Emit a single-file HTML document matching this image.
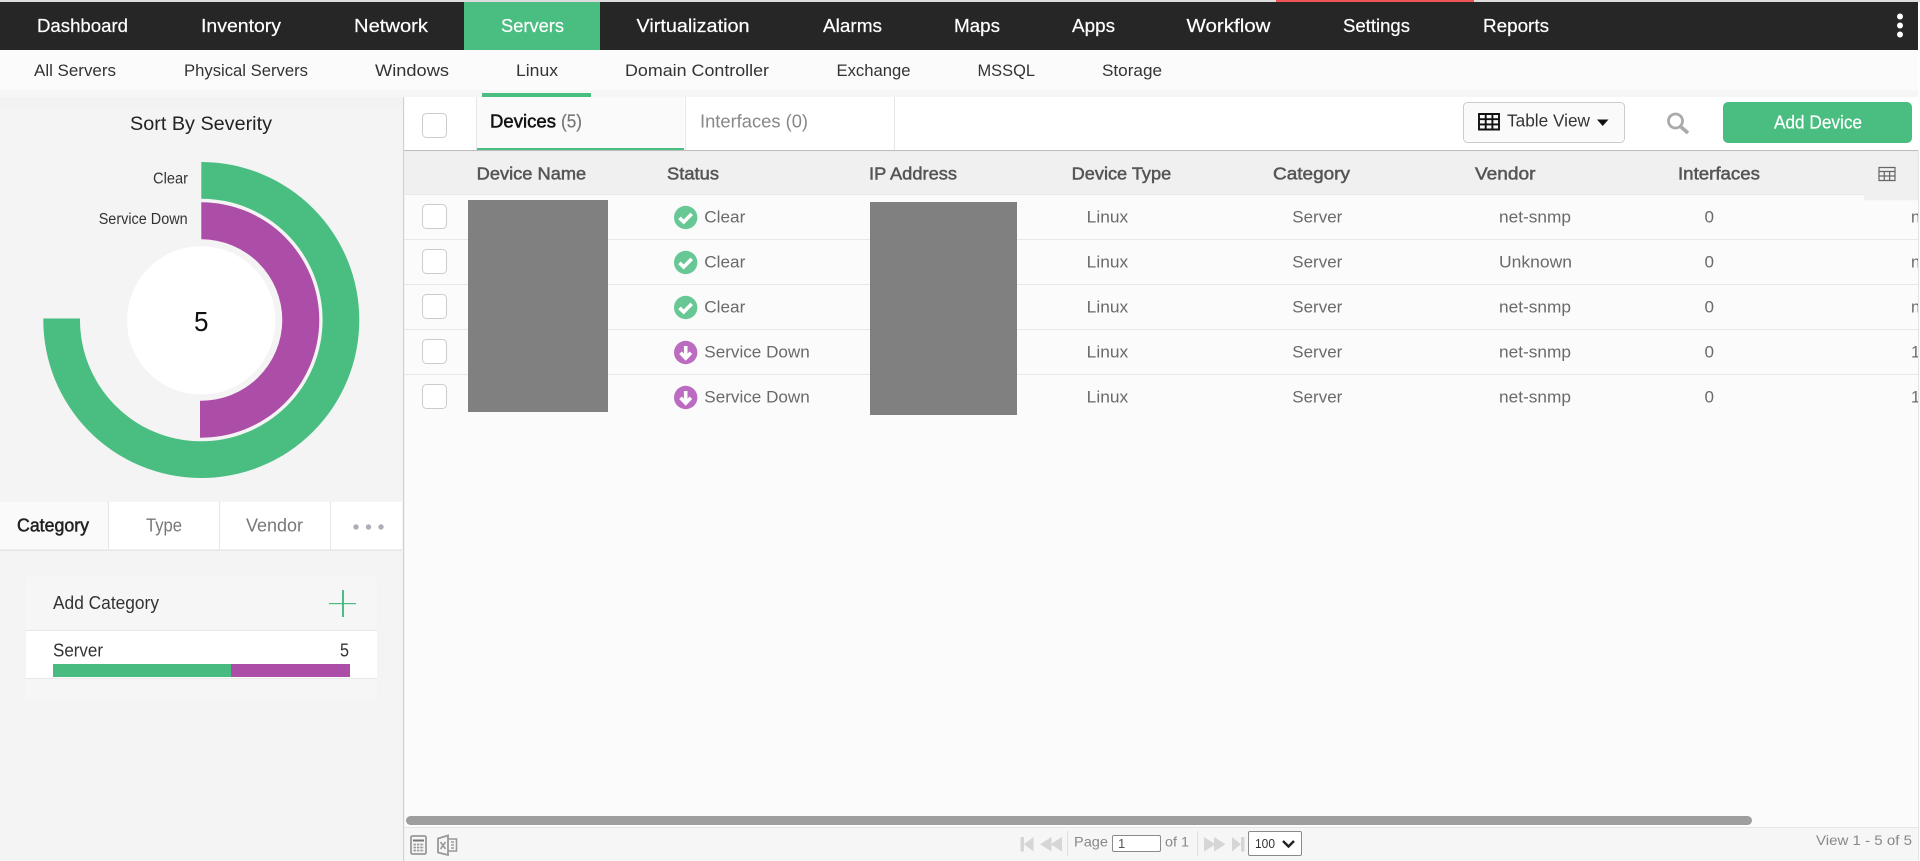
<!DOCTYPE html>
<html lang="en"><head><meta charset="utf-8"><title>Servers - Linux</title>
<style>
html,body{margin:0;padding:0;width:1920px;height:861px;overflow:hidden;background:#fff}
svg{display:block}
text{font-family:"Liberation Sans",Arial,sans-serif}
.n{font-size:18.5px;fill:#fff;stroke:#fff;stroke-width:.2}
.s{font-size:17px;fill:#333}
.h{font-size:17.5px;fill:#555;stroke:#555;stroke-width:.5}
.d{font-size:16.5px;fill:#6a6a6a}
.p{font-size:14px;fill:#888}
</style></head><body>
<svg width="1920" height="861" viewBox="0 0 1920 861" xmlns="http://www.w3.org/2000/svg">
<defs>
<g id="ok"><circle r="11.7" fill="#67c795"/><path d="M-6.2 .3L-2 4.5L6 -3.6" fill="none" stroke="#fff" stroke-width="3.6"/></g>
<g id="dn"><circle r="11.7" fill="#bb6cc1"/><path d="M0 -6.5V5M-5.2 .2L0 5.6L5.2 .2" fill="none" stroke="#fff" stroke-width="3.6"/></g>
<rect id="cb" width="24" height="24" rx="4" fill="#fff" stroke="#ccc" stroke-width="1"/>
</defs>

<!-- top -->
<rect width="1920" height="861" fill="#fff"/>
<rect width="1920" height="2" fill="#ddd"/>
<rect x="1276" width="198" height="2" fill="#f25555"/>
<rect y="2" width="1918" height="48" fill="#262626"/>
<rect x="464" y="2" width="136" height="48" fill="#4abd81"/>
<text class="n" x="37" y="32" textLength="91" lengthAdjust="spacingAndGlyphs">Dashboard</text>
<text class="n" x="201" y="32" textLength="80" lengthAdjust="spacingAndGlyphs">Inventory</text>
<text class="n" x="354" y="32" textLength="74" lengthAdjust="spacingAndGlyphs">Network</text>
<text class="n" x="501" y="32" textLength="63" lengthAdjust="spacingAndGlyphs">Servers</text>
<text class="n" x="636.5" y="32" textLength="113" lengthAdjust="spacingAndGlyphs">Virtualization</text>
<text class="n" x="823" y="32" textLength="59" lengthAdjust="spacingAndGlyphs">Alarms</text>
<text class="n" x="954" y="32" textLength="46" lengthAdjust="spacingAndGlyphs">Maps</text>
<text class="n" x="1072" y="32" textLength="43" lengthAdjust="spacingAndGlyphs">Apps</text>
<text class="n" x="1186.5" y="32" textLength="84" lengthAdjust="spacingAndGlyphs">Workflow</text>
<text class="n" x="1343" y="32" textLength="67" lengthAdjust="spacingAndGlyphs">Settings</text>
<text class="n" x="1483" y="32" textLength="66" lengthAdjust="spacingAndGlyphs">Reports</text>
<circle cx="1900" cy="16.5" r="3" fill="#fff"/><circle cx="1900" cy="25.5" r="3" fill="#fff"/><circle cx="1900" cy="34.5" r="3" fill="#fff"/>

<!-- subnav -->
<rect y="50" width="1920" height="47" fill="#fbfbfb"/>
<rect y="90" width="1920" height="7" fill="#f6f6f6"/>
<text class="s" x="34" y="76" textLength="82" lengthAdjust="spacingAndGlyphs">All Servers</text>
<text class="s" x="184" y="76" textLength="124" lengthAdjust="spacingAndGlyphs">Physical Servers</text>
<text class="s" x="375" y="76" textLength="74" lengthAdjust="spacingAndGlyphs">Windows</text>
<text class="s" x="516" y="76" textLength="42" lengthAdjust="spacingAndGlyphs">Linux</text>
<text class="s" x="625" y="76" textLength="144" lengthAdjust="spacingAndGlyphs">Domain Controller</text>
<text class="s" x="836.5" y="76" textLength="74" lengthAdjust="spacingAndGlyphs">Exchange</text>
<text class="s" x="977.5" y="76" textLength="57.5" lengthAdjust="spacingAndGlyphs">MSSQL</text>
<text class="s" x="1102" y="76" textLength="60" lengthAdjust="spacingAndGlyphs">Storage</text>
<rect x="482" y="93" width="109" height="4" fill="#4abd81"/>

<!-- left panel -->
<rect y="97" width="403" height="764" fill="#f4f4f4"/>
<rect y="97" width="403" height="10" fill="#f2f2f2"/>
<rect x="403" y="97" width="1.3" height="764" fill="#d0d0d0"/>
<text x="130" y="130" font-size="19" fill="#222" textLength="142" lengthAdjust="spacingAndGlyphs">Sort By Severity</text>
<path d="M201.3 162A158 158 0 1 1 43.3 318.5L80 318.5A121.3 121.3 0 1 0 201.3 198.7Z" fill="#4abd81"/>
<path d="M201.3 202.3A118 118 0 0 1 319.3 320.3A118 118 0 0 1 200 437.7L200 400.7A81 81 0 0 0 282.3 320.3A81 81 0 0 0 201.3 239.3Z" fill="#ac4da8"/>
<circle cx="201.2" cy="320.4" r="74.2" fill="#fff"/>
<text x="194" y="331" font-size="28" fill="#111" textLength="14.5" lengthAdjust="spacingAndGlyphs">5</text>
<text x="153" y="183.7" font-size="15.5" fill="#333" textLength="35" lengthAdjust="spacingAndGlyphs">Clear</text>
<text x="98.7" y="224" font-size="15.5" fill="#333" textLength="89" lengthAdjust="spacingAndGlyphs">Service Down</text>

<rect y="502" width="402" height="48" fill="#fff"/>
<rect y="502" width="108" height="48" fill="#fafafa"/>
<rect y="549.5" width="402" height="1.2" fill="#e2e2e2"/>
<rect x="108" y="502" width="1" height="48" fill="#e6e6e6"/><rect x="219" y="502" width="1" height="48" fill="#e6e6e6"/><rect x="330" y="502" width="1" height="48" fill="#e6e6e6"/>
<text x="17" y="531.5" font-size="18" fill="#222" stroke="#222" stroke-width=".5" textLength="72" lengthAdjust="spacingAndGlyphs">Category</text>
<text x="146" y="531.5" font-size="18" fill="#777" textLength="36" lengthAdjust="spacingAndGlyphs">Type</text>
<text x="246" y="531.5" font-size="18" fill="#777" textLength="57" lengthAdjust="spacingAndGlyphs">Vendor</text>
<circle cx="356" cy="527" r="2.7" fill="#aeaeb8"/><circle cx="368.5" cy="527" r="2.7" fill="#aeaeb8"/><circle cx="381" cy="527" r="2.7" fill="#aeaeb8"/>

<rect x="26" y="577" width="351" height="122" fill="#f6f6f6"/>
<text x="53" y="609" font-size="18" fill="#333" textLength="106" lengthAdjust="spacingAndGlyphs">Add Category</text>
<rect x="329" y="603" width="27" height="1.2" fill="#4abd81"/><rect x="342" y="590" width="2" height="27" fill="#4abd81"/>
<rect x="26" y="630" width="351" height="48.5" fill="#fff"/>
<rect x="26" y="630" width="351" height="1" fill="#e8e8e8"/><rect x="26" y="678" width="351" height="1" fill="#e8e8e8"/>
<text x="53" y="656.5" font-size="18" fill="#333" textLength="50" lengthAdjust="spacingAndGlyphs">Server</text>
<text x="340" y="656.5" font-size="18" fill="#333" textLength="9" lengthAdjust="spacingAndGlyphs">5</text>
<rect x="53" y="664" width="178" height="13" fill="#48bc80"/><rect x="231" y="664" width="119" height="13" fill="#ac4da8"/>

<!-- main -->
<rect x="404.3" y="97" width="1513.7" height="764" fill="#fbfbfb"/>
<rect x="404.3" y="97" width="1513.7" height="53" fill="#fff"/>
<rect x="477" y="97" width="207" height="53" fill="#fafafa"/>
<rect x="476" y="97" width="1" height="53" fill="#e6e6e6"/><rect x="685" y="97" width="1" height="53" fill="#e6e6e6"/><rect x="894" y="97" width="1" height="53" fill="#e6e6e6"/>
<rect x="477" y="148" width="207" height="2.2" fill="#4abd81"/>
<rect x="404.3" y="150" width="1513.7" height="1.2" fill="#bdbdbd"/>
<use href="#cb" x="422.5" y="113.5"/>
<text x="490" y="127.5" font-size="18" fill="#111" stroke="#111" stroke-width=".5" textLength="66" lengthAdjust="spacingAndGlyphs">Devices</text>
<text x="561" y="127.5" font-size="18" fill="#777" stroke="#777" stroke-width=".2" textLength="21" lengthAdjust="spacingAndGlyphs">(5)</text>
<text x="700" y="127.5" font-size="18" fill="#888" textLength="108" lengthAdjust="spacingAndGlyphs">Interfaces (0)</text>

<rect x="1463.5" y="102.5" width="161" height="40" rx="4" fill="#fafafa" stroke="#ccc"/>
<path d="M1479 114H1499V129.5H1479ZM1479 119.2H1499M1479 124.4H1499M1485.7 114V129.5M1492.4 114V129.5" fill="none" stroke="#111" stroke-width="1.9"/>
<text x="1507" y="126.5" font-size="17.5" fill="#333" textLength="83" lengthAdjust="spacingAndGlyphs">Table View</text>
<path d="M1597 119.5H1608.5L1602.7 126Z" fill="#111"/>
<circle cx="1675.5" cy="121" r="7" fill="none" stroke="#aaa" stroke-width="2.8"/><path d="M1680.5 126.5L1688 133" stroke="#aaa" stroke-width="3.6"/>
<rect x="1723" y="102" width="189" height="41" rx="5" fill="#4abd81"/>
<text x="1774" y="128.5" font-size="18" fill="#fff" stroke="#fff" stroke-width=".2" textLength="88" lengthAdjust="spacingAndGlyphs">Add Device</text>

<rect x="404.3" y="151.2" width="1513.7" height="43" fill="#f0f0f0"/>
<rect x="1864" y="151.2" width="54" height="49" fill="#f0f0f0"/>
<rect x="404.3" y="194" width="1460" height="1" fill="#e8e8e8"/>
<text class="h" x="476.7" y="179.3" textLength="109.5" lengthAdjust="spacingAndGlyphs">Device Name</text>
<text class="h" x="667" y="179.3" textLength="52" lengthAdjust="spacingAndGlyphs">Status</text>
<text class="h" x="869" y="179.3" textLength="88" lengthAdjust="spacingAndGlyphs">IP Address</text>
<text class="h" x="1071.7" y="179.3" textLength="99.5" lengthAdjust="spacingAndGlyphs">Device Type</text>
<text class="h" x="1273" y="179.3" textLength="77" lengthAdjust="spacingAndGlyphs">Category</text>
<text class="h" x="1475" y="179.3" textLength="60.5" lengthAdjust="spacingAndGlyphs">Vendor</text>
<text class="h" x="1678" y="179.3" textLength="82" lengthAdjust="spacingAndGlyphs">Interfaces</text>
<path d="M1879 167.5H1895V180.5H1879ZM1879 171.5H1895M1879 176H1895M1884.3 171.5V180.5M1889.6 171.5V180.5" fill="none" stroke="#666" stroke-width="1.2"/>

<g fill="#e8e8e8"><rect x="404.3" y="239" width="1513.7" height="1"/><rect x="404.3" y="284" width="1513.7" height="1"/><rect x="404.3" y="329" width="1513.7" height="1"/><rect x="404.3" y="374" width="1513.7" height="1"/></g>

<use href="#cb" x="422.5" y="204.5"/><use href="#cb" x="422.5" y="249.5"/><use href="#cb" x="422.5" y="294.5"/><use href="#cb" x="422.5" y="339.5"/><use href="#cb" x="422.5" y="384.5"/>

<use href="#ok" x="685.7" y="217.5"/><use href="#ok" x="685.7" y="262.5"/><use href="#ok" x="685.7" y="307.5"/><use href="#dn" x="685.7" y="352.5"/><use href="#dn" x="685.7" y="397.5"/>

<text class="d" x="704.3" y="222.7" textLength="41" lengthAdjust="spacingAndGlyphs">Clear</text>
<text class="d" x="704.3" y="267.7" textLength="41" lengthAdjust="spacingAndGlyphs">Clear</text>
<text class="d" x="704.3" y="312.7" textLength="41" lengthAdjust="spacingAndGlyphs">Clear</text>
<text class="d" x="704.3" y="357.7" textLength="105.5" lengthAdjust="spacingAndGlyphs">Service Down</text>
<text class="d" x="704.3" y="402.7" textLength="105.5" lengthAdjust="spacingAndGlyphs">Service Down</text>

<text class="d" x="1086.7" y="222.7" textLength="41.5" lengthAdjust="spacingAndGlyphs">Linux</text>
<text class="d" x="1086.7" y="267.7" textLength="41.5" lengthAdjust="spacingAndGlyphs">Linux</text>
<text class="d" x="1086.7" y="312.7" textLength="41.5" lengthAdjust="spacingAndGlyphs">Linux</text>
<text class="d" x="1086.7" y="357.7" textLength="41.5" lengthAdjust="spacingAndGlyphs">Linux</text>
<text class="d" x="1086.7" y="402.7" textLength="41.5" lengthAdjust="spacingAndGlyphs">Linux</text>

<text class="d" x="1292.3" y="222.7" textLength="50" lengthAdjust="spacingAndGlyphs">Server</text>
<text class="d" x="1292.3" y="267.7" textLength="50" lengthAdjust="spacingAndGlyphs">Server</text>
<text class="d" x="1292.3" y="312.7" textLength="50" lengthAdjust="spacingAndGlyphs">Server</text>
<text class="d" x="1292.3" y="357.7" textLength="50" lengthAdjust="spacingAndGlyphs">Server</text>
<text class="d" x="1292.3" y="402.7" textLength="50" lengthAdjust="spacingAndGlyphs">Server</text>

<text class="d" x="1499" y="222.7" textLength="72" lengthAdjust="spacingAndGlyphs">net-snmp</text>
<text class="d" x="1499" y="267.7" textLength="73" lengthAdjust="spacingAndGlyphs">Unknown</text>
<text class="d" x="1499" y="312.7" textLength="72" lengthAdjust="spacingAndGlyphs">net-snmp</text>
<text class="d" x="1499" y="357.7" textLength="72" lengthAdjust="spacingAndGlyphs">net-snmp</text>
<text class="d" x="1499" y="402.7" textLength="72" lengthAdjust="spacingAndGlyphs">net-snmp</text>

<text class="d" x="1704.5" y="222.7" textLength="9.5" lengthAdjust="spacingAndGlyphs">0</text>
<text class="d" x="1704.5" y="267.7" textLength="9.5" lengthAdjust="spacingAndGlyphs">0</text>
<text class="d" x="1704.5" y="312.7" textLength="9.5" lengthAdjust="spacingAndGlyphs">0</text>
<text class="d" x="1704.5" y="357.7" textLength="9.5" lengthAdjust="spacingAndGlyphs">0</text>
<text class="d" x="1704.5" y="402.7" textLength="9.5" lengthAdjust="spacingAndGlyphs">0</text>

<text class="d" x="1911" y="222.7">n</text><text class="d" x="1911" y="267.7">n</text><text class="d" x="1911" y="312.7">n</text><text class="d" x="1911" y="357.7">1</text><text class="d" x="1911" y="402.7">1</text>
<rect x="1918" y="50" width="2" height="811" fill="#fff"/>
<rect x="1918" y="150" width="1" height="711" fill="#e4e4e4"/>

<rect x="468" y="200" width="140" height="212" fill="#808080"/>
<rect x="870" y="202" width="147" height="213" fill="#808080"/>

<!-- bottom -->
<rect x="406" y="816" width="1346" height="9" rx="4.5" fill="#9e9e9e"/>
<rect x="404.3" y="827" width="1513.7" height="1" fill="#e6e6e6"/>
<rect x="404.3" y="828" width="1513.7" height="33" fill="#f6f6f6"/>
<g fill="none" stroke="#999">
<rect x="411" y="836" width="15" height="18" rx="1.5" stroke-width="1.8"/>
<path d="M413 840.5H424" stroke="#777" stroke-width="2"/>
<path d="M413.5 844.5H424M413.5 847.5H424M413.5 850.5H424" stroke-dasharray="2.4 1" stroke-width="1.7"/>
<path d="M438 838.5L448 835.5V855L438 852.5Z" stroke-width="1.8"/>
<path d="M448 839H456.5V851H448M440.5 842L445.5 849M445.5 842L440.5 849M451 842H454M451 845H454M451 848H454" stroke-width="1.6"/>
</g>
<g fill="#d6d6d6">
<rect x="1020.5" y="837" width="3.5" height="14.5"/><path d="M1033.5 837V851.5L1024 844.2Z"/>
<path d="M1051.5 837V851.5L1040 844.2ZM1062 837V851.5L1050.5 844.2Z"/>
<rect x="1067" y="831" width="1.2" height="25" fill="#e2e2e2"/>
<rect x="1197" y="831" width="1.2" height="25" fill="#e2e2e2"/>
<path d="M1204 837V851.5L1215.5 844.2ZM1214 837V851.5L1225.5 844.2Z"/>
<path d="M1232 837V851.5L1241 844.2Z"/><rect x="1241" y="837" width="3.5" height="14.5"/>
</g>
<text class="p" x="1074" y="846.5" textLength="34" lengthAdjust="spacingAndGlyphs">Page</text>
<rect x="1112.5" y="835.5" width="48" height="16" rx="1.5" fill="#fff" stroke="#8a8a8a"/>
<text x="1118" y="848" font-size="13" fill="#555">1</text>
<text class="p" x="1165" y="846.5" textLength="24" lengthAdjust="spacingAndGlyphs">of 1</text>
<rect x="1248.5" y="831.5" width="53" height="24" rx="1.5" fill="#fff" stroke="#8a8a8a"/>
<text x="1255" y="848" font-size="13" fill="#333" textLength="20" lengthAdjust="spacingAndGlyphs">100</text>
<path d="M1283 841L1288.5 846.5L1294 841" fill="none" stroke="#222" stroke-width="2.4"/>
<text class="p" x="1816" y="845" textLength="96" lengthAdjust="spacingAndGlyphs">View 1 - 5 of 5</text>
</svg>
</body></html>
